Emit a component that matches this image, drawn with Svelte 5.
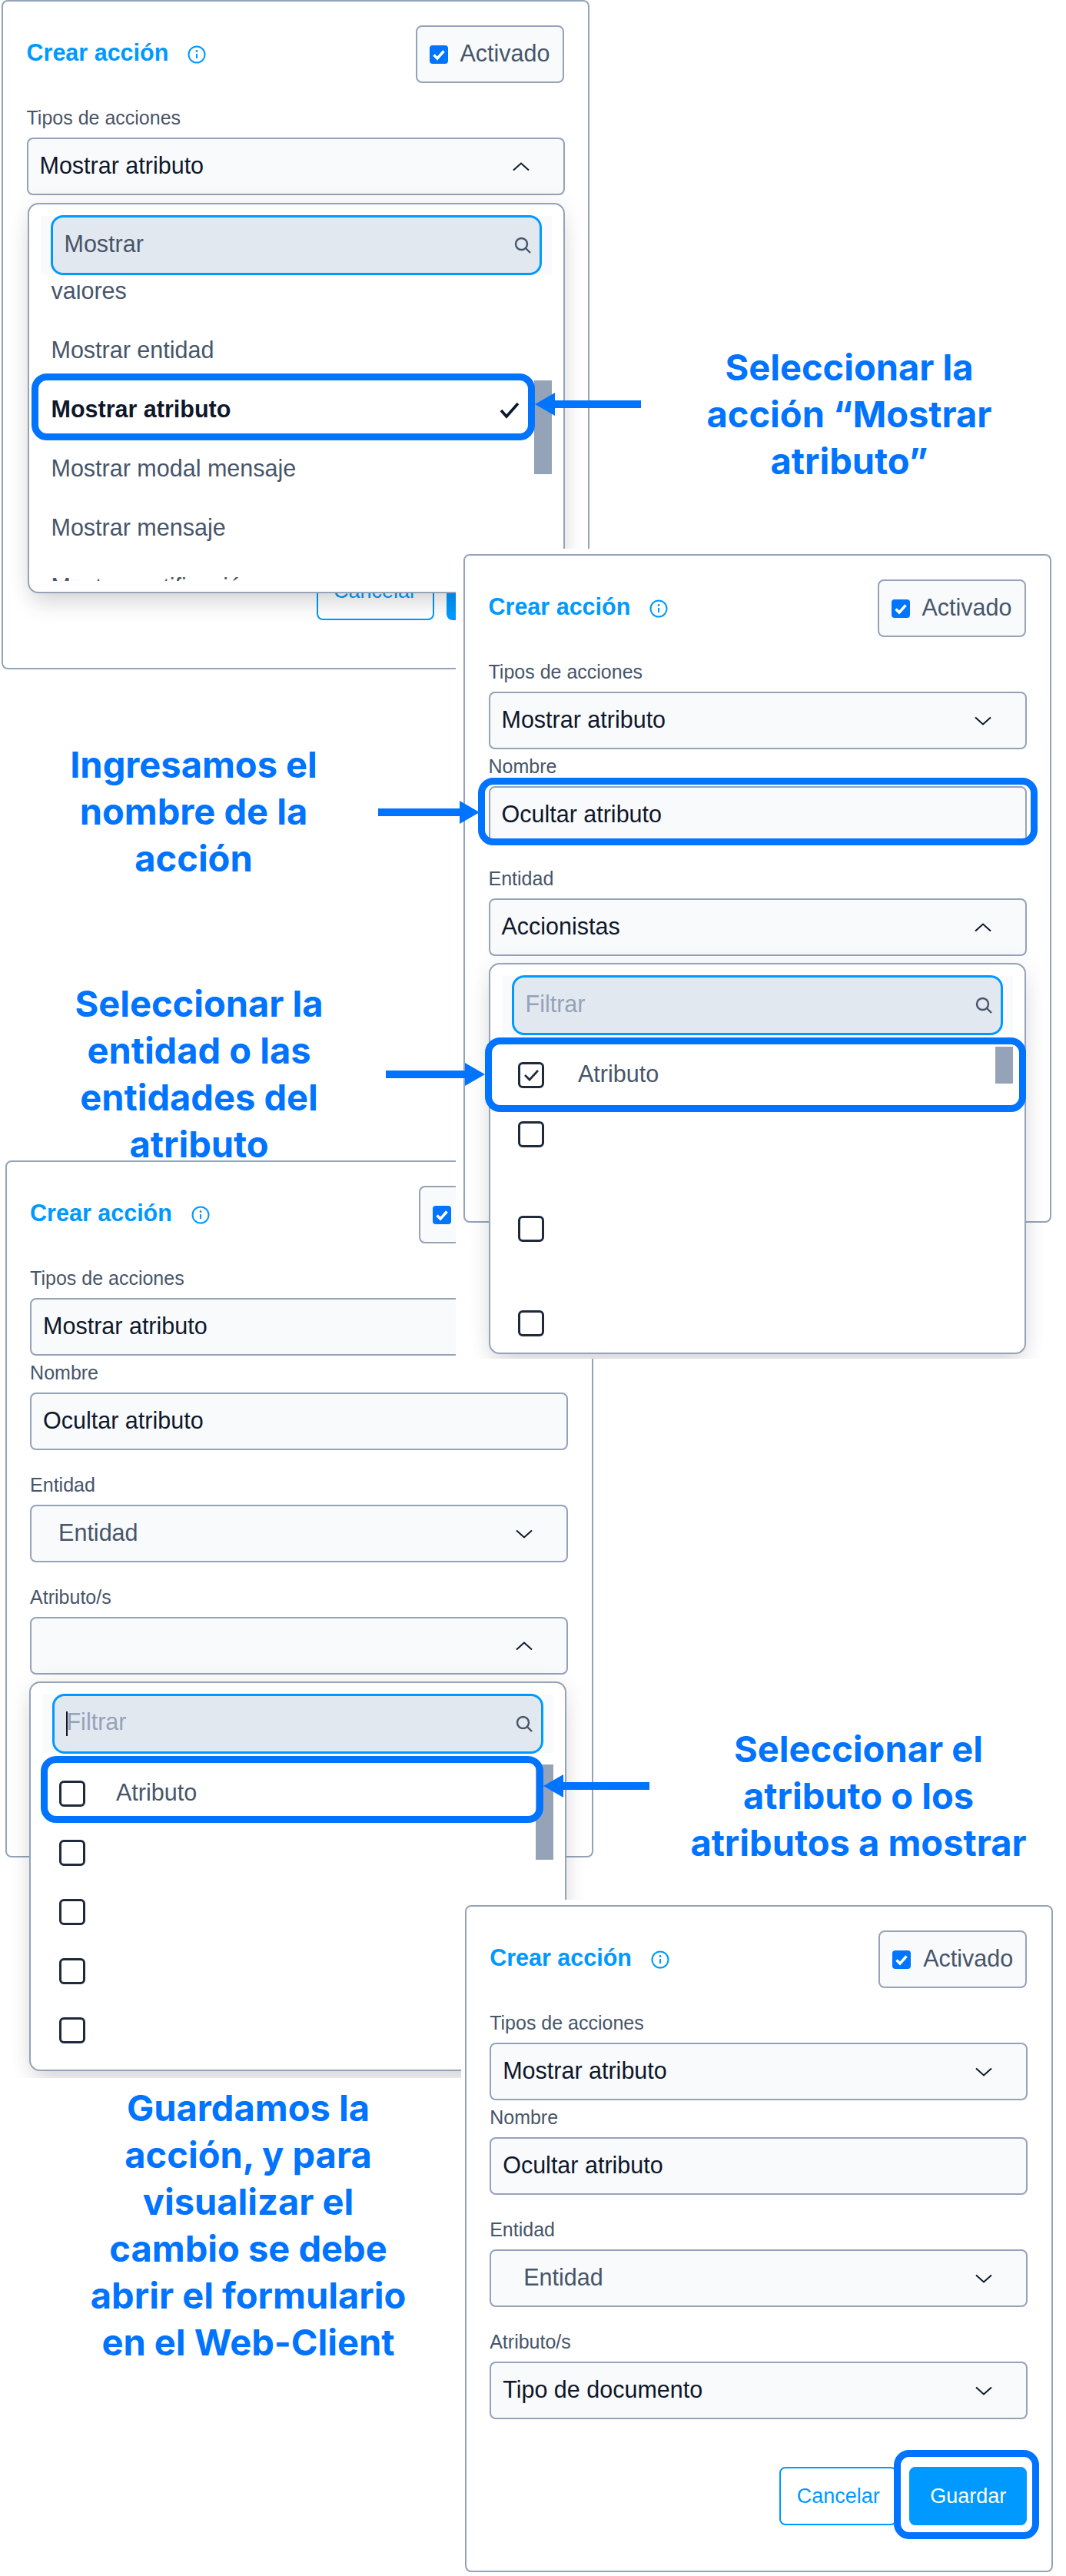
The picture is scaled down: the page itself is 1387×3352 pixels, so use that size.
<script>
	const tipo = { label: "Tipos de acciones", value: "Mostrar atributo" };
	const nombre = { label: "Nombre", value: "Ocultar atributo", tight: true, plain: true };
	const entidad = { label: "Entidad", value: "Entidad", indent: true };
	const atributo = { label: "Atributo/s", value: "Tipo de documento" };

	// only what the open dropdown leaves visible is listed
	const openType = [{ ...tipo, open: true }];
	const openEntity = [tipo, nombre, { label: "Entidad", value: "Accionistas", open: true }];
	const openAttr = [tipo, nombre, entidad, { label: "Atributo/s", value: "", open: true }];
	const closed = [tipo, nombre, entidad, atributo];
</script>

{#snippet chevron(up)}
	<svg class="chevron" class:up width="22" height="12" viewBox="0 0 22 12">
		<path d="M1 1.5 L11 10.5 L21 1.5" />
	</svg>
{/snippet}

{#snippet head()}
	<header class="head">
		<div class="title">
			<h2>Crear acción</h2>
			<svg class="info" width="24" height="24" viewBox="0 0 24 24">
				<circle cx="12" cy="12" r="10.5" />
				<path d="M12 11 V17" />
				<circle class="dot" cx="12" cy="7.5" r="1.4" />
			</svg>
		</div>
		<div class="toggle">
			<span class="tick">
				<svg width="24" height="24" viewBox="0 0 24 24"><path d="M5.5 12.5 L10 17 L18.5 7.5" /></svg>
			</span>
			<span class="toggle-text">Activado</span>
		</div>
	</header>
{/snippet}

{#snippet form(fields)}
	{#each fields as f}
		<div class="field" class:tight={f.tight}>
			<span class="label">{f.label}</span>
			<div class="control" class:indent={f.indent}>
				<span>{f.value}</span>
				{#if !f.plain}{@render chevron(f.open)}{/if}
			</div>
		</div>
	{/each}
{/snippet}

{#snippet actions()}
	<div class="actions">
		<button class="cancel">Cancelar</button>
		<button class="save">Guardar</button>
	</div>
{/snippet}

{#snippet search(text, placeholder, caret)}
	<div class="zone">
		<div class="input">
			<span class:placeholder>
				{#if caret}<i class="caret"></i>{/if}{text}
			</span>
			<svg width="22" height="22" viewBox="0 0 22 22">
				<circle cx="9.5" cy="9.5" r="7.5" />
				<path d="M15 15 L21 21" />
			</svg>
		</div>
	</div>
{/snippet}

{#snippet box(checked)}
	<span class="box">
		{#if checked}
			<svg width="28" height="28" viewBox="0 0 28 28"><path d="M6 14 L12 20 L23 8" /></svg>
		{/if}
	</span>
{/snippet}

{#snippet arrow(cls, len, right)}
	<svg class="arrow {cls}" class:right width={len} height="30" viewBox="0 0 {len} 30">
		<polygon points="0,15 26,0 26,10 {len},10 {len},20 26,20 26,30" />
	</svg>
{/snippet}

<div class="canvas">
	<section class="shot s1">
		<div class="panel p1">
			{@render head()}
			{@render form(openType)}
			{@render actions()}
			<div class="dropdown d1">
				{@render search("Mostrar", false, false)}
				<div class="list">
					<div class="opts">
						<div class="opt">valores</div>
						<div class="opt">Mostrar entidad</div>
						<div class="opt sel">
							Mostrar atributo
							<svg width="26" height="22" viewBox="0 0 26 22"><path d="M2 11 L9 19 L24 2" /></svg>
						</div>
						<div class="opt">Mostrar modal mensaje</div>
						<div class="opt">Mostrar mensaje</div>
						<div class="opt">Mostrar notificación</div>
					</div>
				</div>
				<div class="thumb t1"></div>
			</div>
		</div>
	</section>

	<section class="shot s3">
		<div class="panel p3">
			{@render head()}
			{@render form(openAttr)}
			<div class="dropdown d3">
				{@render search("Filtrar", true, true)}
				<div class="rows">
					<div class="row">{@render box(false)}<span>Atributo</span></div>
					<div class="row">{@render box(false)}</div>
					<div class="row">{@render box(false)}</div>
					<div class="row">{@render box(false)}</div>
					<div class="row">{@render box(false)}</div>
				</div>
				<div class="thumb t3"></div>
			</div>
		</div>
	</section>

	<section class="shot s2">
		<div class="panel p2">
			{@render head()}
			{@render form(openEntity)}
			<div class="dropdown d2">
				{@render search("Filtrar", true, false)}
				<div class="rows">
					<div class="row">{@render box(true)}<span>Atributo</span></div>
					<div class="row tall">{@render box(false)}</div>
					<div class="row tall">{@render box(false)}</div>
					<div class="row">{@render box(false)}</div>
				</div>
				<div class="thumb t2"></div>
			</div>
		</div>
	</section>

	<section class="shot s4">
		<div class="panel p4">
			{@render head()}
			{@render form(closed)}
			{@render actions()}
		</div>
	</section>

	<div class="mark m1"></div>
	<div class="mark m2"></div>
	<div class="mark m3"></div>
	<div class="mark m4"></div>
	<div class="mark m5"></div>

	{@render arrow("a1", 138, false)}
	{@render arrow("a2", 132, true)}
	{@render arrow("a3", 129, true)}
	{@render arrow("a4", 138, false)}

	<p class="note n1">Seleccionar la<br />acción “Mostrar<br />atributo”</p>
	<p class="note n2">Ingresamos el<br />nombre de la<br />acción</p>
	<p class="note n3">Seleccionar la<br />entidad o las<br />entidades del<br />atributo</p>
	<p class="note n4">Seleccionar el<br />atributo o los<br />atributos a mostrar</p>
	<p class="note n5">Guardamos la<br />acción, y para<br />visualizar el<br />cambio se debe<br />abrir el formulario<br />en el Web-Client</p>
</div>

<style>
	:global(body) {
		background: #fff;
	}

	.canvas {
		position: relative;
		width: 1387px;
		height: 3352px;
		overflow: hidden;
		background: #fff;
		font-family: "Liberation Sans", Arial, sans-serif;
		font-size: 30.5px;
		color: #0f172a;
	}

	/* each pasted screenshot sits on the canvas and clips its own shadow */
	.shot {
		position: absolute;
		overflow: hidden;
		background: #fff;
		box-sizing: border-box;
	}
	.s1 { left: 0; top: 0; width: 800px; height: 880px; padding-left: 2px; z-index: 1; }
	.s3 { left: 2px; top: 1504px; width: 774px; height: 1200px; padding: 6px 0 0 4.6px; z-index: 2; }
	.s2 { left: 593px; top: 714px; width: 787px; height: 1054px; padding: 7px 0 0 10px; z-index: 3; }
	.s4 { left: 600px; top: 2472px; width: 787px; height: 880px; padding: 7px 0 0 4.7px; z-index: 4; }

	.panel {
		position: relative;
		box-sizing: border-box;
		width: 765px;
		padding: 31px 30.5px 0 30.5px;
		border: 2px solid #94a3b8;
		border-radius: 8px;
		background: #fff;
	}
	.p1 { height: 871px; }
	.p2 { height: 870px; }
	.p3 { height: 907px; }
	.p4 { height: 868px; }

	.head {
		display: flex;
		align-items: center;
		justify-content: space-between;
		height: 75px;
		margin-right: 1px;
	}
	.title {
		display: flex;
		align-items: center;
		gap: 25px;
	}
	h2 {
		margin: 0 0 4px;
		font-size: 30.5px;
		font-weight: 700;
		color: #0099ff;
	}
	.info {
		fill: none;
		stroke: #0099ff;
		stroke-width: 2;
	}
	.info .dot {
		fill: #0099ff;
		stroke: none;
	}

	.toggle {
		box-sizing: border-box;
		display: flex;
		align-items: center;
		gap: 16px;
		width: 193px;
		height: 75px;
		padding-left: 16px;
		border: 2px solid #94a3b8;
		border-radius: 8px;
		background: #f8fafc;
		color: #475569;
	}
	.toggle-text {
		margin-bottom: 2px;
	}
	.tick {
		display: block;
		width: 24px;
		height: 24px;
		border-radius: 4px;
		background: #0075ff;
	}
	.tick svg {
		display: block;
		fill: none;
		stroke: #fff;
		stroke-width: 3.4;
	}

	.field {
		margin-top: 30px;
	}
	.field.tight {
		margin-top: 7px;
	}
	.label {
		display: block;
		height: 30px;
		margin-bottom: 11px;
		font-size: 25px;
		line-height: 30px;
		color: #475569;
	}
	.control {
		box-sizing: border-box;
		display: flex;
		align-items: center;
		justify-content: space-between;
		height: 75px;
		padding: 0 44px 0 15px;
		border: 2px solid #94a3b8;
		border-radius: 8px;
		background: #f8fafc;
	}
	.control span {
		margin-bottom: 3px;
	}
	.control.indent {
		padding-left: 35px;
		color: #475569;
	}
	.p4 .control.indent {
		padding-left: 42px;
	}
	.chevron {
		fill: none;
		stroke: #0f172a;
		stroke-width: 2;
	}
	.chevron.up {
		transform: rotate(180deg);
	}

	.actions {
		display: flex;
		justify-content: flex-end;
		gap: 16px;
		margin: 62px 1px 0 0;
	}
	.p1 .actions {
		margin-top: 477px;
	}
	.actions button {
		box-sizing: border-box;
		width: 153px;
		height: 76px;
		border: 2px solid #0099ff;
		border-radius: 8px;
		font-family: inherit;
		font-size: 27px;
	}
	.cancel {
		background: #fff;
		color: #0099ff;
	}
	.save {
		background: #0099ff;
		color: #fff;
	}

	.dropdown {
		position: absolute;
		box-sizing: border-box;
		width: 699px;
		padding: 15px;
		border: 2px solid #94a3b8;
		border-radius: 14px;
		background: #fff;
		box-shadow: 0 20px 30px -6px rgba(0, 0, 0, 0.12), 0 0 30px rgba(0, 0, 0, 0.08);
	}
	.d1 { left: 31.5px; top: 262px; height: 508px; }
	.d2 { left: 30.5px; top: 530px; height: 509px; }
	.d3 { left: 29.9px; top: 676px; height: 507px; }

	.zone {
		height: 76px;
		padding: 0 13px;
		background: #f8fafc;
	}
	.input {
		box-sizing: border-box;
		position: relative;
		top: -1px;
		display: flex;
		align-items: center;
		justify-content: space-between;
		height: 78px;
		padding: 0 11px 0 15px;
		border: 3px solid #0099ff;
		border-radius: 16px;
		background: #e2e8f0;
		color: #475569;
	}
	.input span {
		margin-bottom: 4px;
	}
	.input svg {
		flex: none;
		fill: none;
		stroke: #475569;
		stroke-width: 2.4;
	}
	.placeholder {
		color: #94a3b8;
	}
	.caret {
		display: inline-block;
		width: 2px;
		height: 32px;
		margin-right: -2px;
		vertical-align: middle;
		background: #0f172a;
	}

	.list {
		height: 385px;
		margin-top: 14px;
		overflow: hidden;
	}
	.opts {
		margin-top: -31px;
	}
	.opt {
		display: flex;
		align-items: center;
		justify-content: space-between;
		height: 77px;
		padding: 0 42px 0 14px;
		color: #475569;
	}
	.opt.sel {
		font-weight: 700;
		color: #0f172a;
	}
	.opt svg {
		margin-top: 2px;
		fill: none;
		stroke: #0f172a;
		stroke-width: 3.6;
	}

	.rows {
		margin-top: 15px;
		height: 401px;
		overflow: hidden;
	}
	.row {
		display: flex;
		align-items: flex-start;
		gap: 44px;
		box-sizing: border-box;
		height: 77px;
		padding: 21px 0 0 21.5px;
		color: #475569;
		line-height: 30px;
	}
	.row.tall {
		height: 123px;
	}
	.d3 .row {
		gap: 40px;
	}
	.box {
		flex: none;
		box-sizing: border-box;
		width: 34px;
		height: 34px;
		border: 3px solid #1e293b;
		border-radius: 6px;
		background: #fff;
	}
	.box svg {
		display: block;
		fill: none;
		stroke: #1e293b;
		stroke-width: 2.6;
	}

	.thumb {
		position: absolute;
		right: 15px;
		width: 23px;
		background: #94a3b8;
	}
	.t1 { top: 229px; height: 122px; }
	.t2 { top: 107px; height: 48px; }
	.t3 { top: 106px; height: 124px; }

	/* callouts drawn over the screenshots */
	.mark {
		position: absolute;
		z-index: 5;
		box-sizing: border-box;
		border: 9px solid #0073ff;
		border-radius: 20px;
	}
	.m1 { left: 41px; top: 486px; width: 655px; height: 87px; }
	.m2 { left: 622px; top: 1012px; width: 728px; height: 88px; }
	.m3 { left: 631px; top: 1350px; width: 704px; height: 97px; }
	.m4 { left: 53px; top: 2285px; width: 654px; height: 87px; }
	.m5 { left: 1163px; top: 3188px; width: 189px; height: 116px; }

	.arrow {
		position: absolute;
		z-index: 6;
		fill: #0073ff;
	}
	.arrow.right {
		transform: scaleX(-1);
	}
	.a1 { left: 696px; top: 511px; }
	.a2 { left: 492px; top: 1042px; }
	.a3 { left: 502px; top: 1383px; }
	.a4 { left: 707px; top: 2309px; }

	.note {
		position: absolute;
		z-index: 6;
		width: 500px;
		margin: 0;
		font-family: Inter, "Liberation Sans", sans-serif;
		font-size: 47px;
		font-weight: 700;
		line-height: 61px;
		text-align: center;
		color: #0073ff;
	}
	.n1 { left: 855px; top: 447px; }
	.n2 { left: 2px; top: 964px; }
	.n3 { left: 9px; top: 1275px; }
	.n4 { left: 867px; top: 2245px; }
	.n5 { left: 73px; top: 2712px; }
</style>
